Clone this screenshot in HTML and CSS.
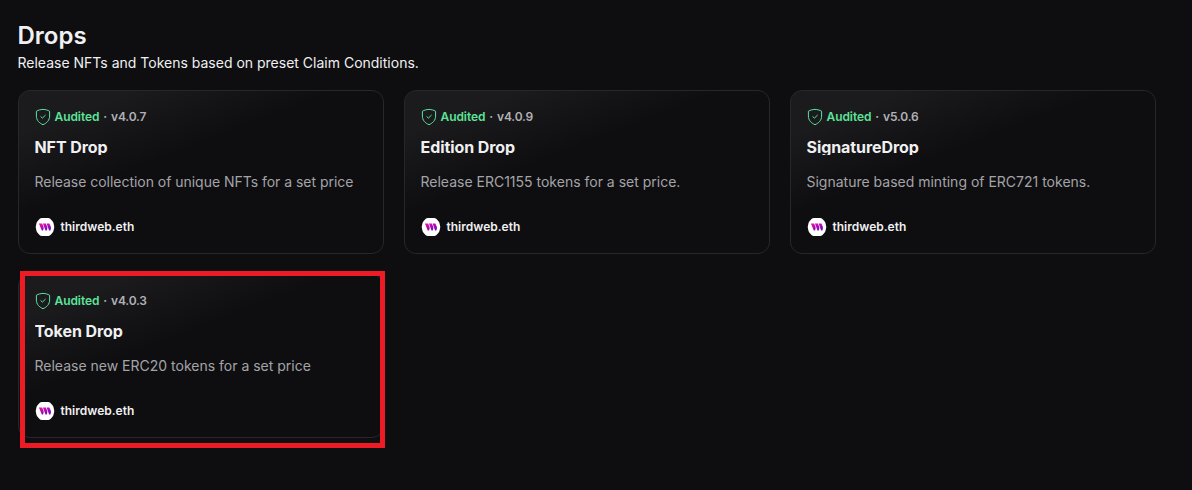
FILE: index.html
```html
<!DOCTYPE html>
<html lang="en">
<head>
    <meta charset="UTF-8">
    <meta name="viewport" content="width=device-width, initial-scale=1.0">
    <title>Drops</title>
    <link rel="stylesheet" href="styles.css">
</head>
<body>
    <!-- Shared icons -->
    <svg class="sprite" width="0" height="0">
        <linearGradient id="brand" x1="0" y1="0" x2="0.5" y2="1">
            <stop offset="0" stop-color="#f213a4"/>
            <stop offset="1" stop-color="#7a08c0"/>
        </linearGradient>
        <symbol id="shield" viewBox="0 0 16 18">
            <path d="M8 1.400C5.500 1.500 3.300 2.100 1.400 3.200V8c0 4.400 2.800 7 6.600 8.700 3.800-1.700 6.600-4.300 6.600-8.700V3.200C12.700 2.100 10.500 1.500 8 1.400z"/>
            <path d="M5.600 8.500l1.800 1.600 3.200-3.100"/>
        </symbol>
        <symbol id="logo" viewBox="0 0 20 20">
            <path fill="#fff" d="M7 .9h6q1.500 0 2.500 1l2 2.300q.8.900 1.100 2.300l.7 3.500-.7 3.500q-.3 1.400-1.100 2.300l-2 2.300q-1 1-2.500 1H7q-1.500 0-2.500-1l-2-2.300q-.8-.9-1.100-2.300L.7 10l.7-3.500q.3-1.400 1.100-2.300l2-2.300q1-1 2.500-1z"/>
            <path fill="url(#brand)" d="M3.900 6.400h3.200l1.500 3.700q.3 1.800-.6 3.500H6.800zM7.900 6.400h2.900l1.500 3.700q.3 1.800-.6 3.500h-1.200zM11.600 6.400h2.800l1.500 3.700q.3 1.800-.6 3.500h-1.200z"/>
        </symbol>
    </svg>

    <div class="container">
        <h1>Drops</h1>
        <p class="subtitle">Release NFTs and Tokens based on preset Claim Conditions.</p>

        <div class="grid">
            <div class="card">
                <div class="audit">
                    <svg class="shield"><use href="#shield"/></svg>
                    <span class="audited">Audited</span>
                    <span class="dot">·</span>
                    <span class="version">v4.0.7</span>
                </div>
                <h2>NFT Drop</h2>
                <p class="description wide">Release collection of unique NFTs for a set price</p>
                <div class="publisher">
                    <svg class="logo"><use href="#logo"/></svg>
                    <span>thirdweb.eth</span>
                </div>
            </div>

            <div class="card">
                <div class="audit">
                    <svg class="shield"><use href="#shield"/></svg>
                    <span class="audited">Audited</span>
                    <span class="dot">·</span>
                    <span class="version">v4.0.9</span>
                </div>
                <h2>Edition Drop</h2>
                <p class="description">Release ERC1155 tokens for a set price.</p>
                <div class="publisher">
                    <svg class="logo"><use href="#logo"/></svg>
                    <span>thirdweb.eth</span>
                </div>
            </div>

            <div class="card">
                <div class="audit">
                    <svg class="shield"><use href="#shield"/></svg>
                    <span class="audited">Audited</span>
                    <span class="dot">·</span>
                    <span class="version">v5.0.6</span>
                </div>
                <h2>SignatureDrop</h2>
                <p class="description">Signature based minting of ERC721 tokens.</p>
                <div class="publisher">
                    <svg class="logo"><use href="#logo"/></svg>
                    <span>thirdweb.eth</span>
                </div>
            </div>

            <div class="card highlighted">
                <div class="audit">
                    <svg class="shield"><use href="#shield"/></svg>
                    <span class="audited">Audited</span>
                    <span class="dot">·</span>
                    <span class="version">v4.0.3</span>
                </div>
                <h2>Token Drop</h2>
                <p class="description">Release new ERC20 tokens for a set price</p>
                <div class="publisher">
                    <svg class="logo"><use href="#logo"/></svg>
                    <span>thirdweb.eth</span>
                </div>
            </div>
        </div>
    </div>
</body>
</html>
```
FILE: styles.css
```css
*,
*::after {
    box-sizing: border-box;
}

body {
    font-family: Inter, 'Liberation Sans', sans-serif;
    background-color: #0e0e10;
    color: #f0f0f2;
    margin: 0;
    min-height: 100vh;
}

.sprite {
    position: absolute;
}

.container {
    padding: 21px 36px 0 17.5px;
}

h1 {
    margin: 0;
    font-size: 24px;
    font-weight: 600;
    line-height: 29px;
}

.subtitle {
    margin: 2px 0 16px;
    font-size: 14px;
    font-weight: 400;
    line-height: 22px;
}

.grid {
    display: grid;
    grid-template-columns: repeat(3, 366px);
    gap: 20px;
}

.card {
    position: relative;
    height: 164px;
    padding: 16px;
    border: 1px solid #27272b;
    border-radius: 12px;
    background: linear-gradient(158.84deg, rgba(255, 255, 255, 0.055) 14%, rgba(255, 255, 255, 0) 41%);
}

.audit {
    display: flex;
    align-items: center;
    height: 19px;
    gap: 4px;
    font-size: 12px;
    font-weight: 600;
    letter-spacing: -0.08px;
    color: #b1b1b7;
}

.audited {
    color: #5ce499;
}

.version {
    letter-spacing: -0.2px;
}

.shield {
    width: 16px;
    height: 18px;
    fill: none;
    stroke: #5ce4a4;
    stroke-width: 1;
}

h2 {
    margin: 13px 0 0;
    font-size: 16px;
    font-weight: 700;
    line-height: 16px;
    letter-spacing: -0.08px;
    overflow: hidden;
}

.description {
    margin: 16px 0 0;
    font-size: 14px;
    line-height: 22px;
    color: #a4a4a8;
}

.wide {
    letter-spacing: -0.03px;
}

.publisher {
    display: flex;
    align-items: center;
    gap: 6px;
    height: 20px;
    margin-top: 24px;
    font-size: 12px;
    font-weight: 600;
}

.publisher span {
    margin-top: -1px;
}

.logo {
    width: 20px;
    height: 20px;
}

/* Red marker frame around the selected card */
.highlighted::after {
    content: '';
    position: absolute;
    top: -4px;
    left: 1px;
    width: 365px;
    height: 177px;
    border: 5px solid #ed1c24;
}
```
